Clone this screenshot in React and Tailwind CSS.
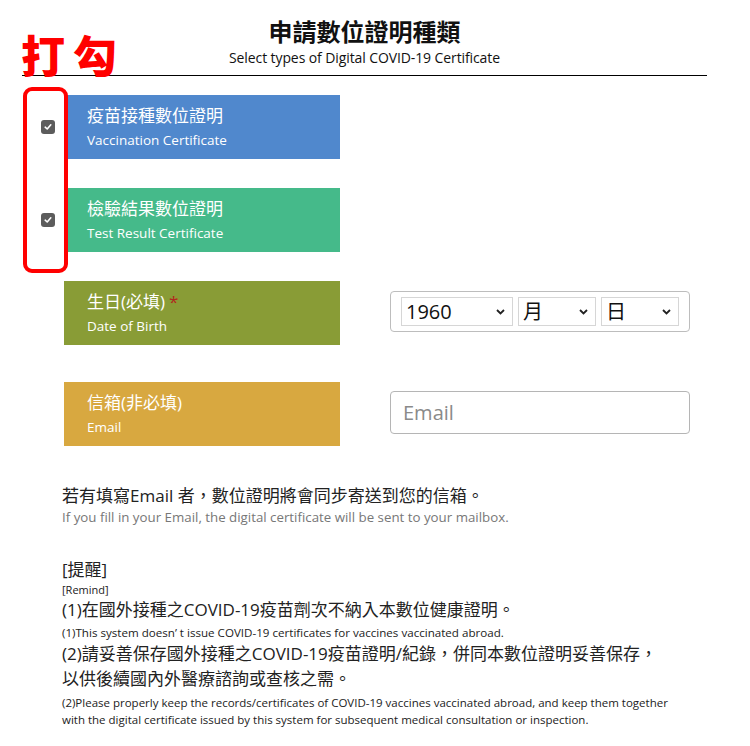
import React from 'react';

const font = { fontFamily: '"Open Sans", "Noto Sans CJK TC", sans-serif' };

const CheckBox = () => (
  <div className="w-[14px] h-[14px] rounded-[3px] bg-[#5c5c5c] flex items-center justify-center">
    <svg width="8" height="8" viewBox="0 0 8 8">
      <path d="M1.2 4.2 L3.2 6 L6.8 1.8" fill="none" stroke="#fff" strokeWidth="1.6" strokeLinecap="round" strokeLinejoin="round" />
    </svg>
  </div>
);

const Chevron = () => (
  <svg width="9" height="6" viewBox="0 0 9 6">
    <path d="M1 1 L4.5 4.5 L8 1" fill="none" stroke="#222" strokeWidth="1.8" />
  </svg>
);

const LabelBox = ({ color, zh, en, required }) => (
  <div className={`w-[276px] h-[64px] ${color} pl-[23px] pt-[9px] text-white`}>
    <div className="text-[17px] leading-[24px]">
      {zh}
      {required && <span className="text-[#b3261e] ml-[4px]">*</span>}
    </div>
    <div className="text-[13.5px] leading-[20px] mt-[2px]">{en}</div>
  </div>
);

const SelectBox = ({ value, width }) => (
  <div className={`${width} h-[29px] border border-[#d6d6d6] flex items-center justify-between pl-[4px] pr-[7px]`}>
    <span className="text-[20px] leading-none text-[#111]">{value}</span>
    <Chevron />
  </div>
);

export default function App() {
  return (
    <div className="relative w-[750px] h-[746px] bg-white overflow-hidden text-[#222]" style={font}>
      <div className="ml-[22px] w-[685px]">
        {/* Header */}
        <div className="pt-[17px] pb-[8px] border-b-[1.5px] border-black text-center">
          <h1 className="text-[24px] leading-[29px] font-bold text-[#111]">申請數位證明種類</h1>
          <p className="text-[14px] leading-[19px] mt-[2px] tracking-[-0.1px] text-[#111]">Select types of Digital COVID-19 Certificate</p>
        </div>

        {/* Certificate types */}
        <div className="flex items-center mt-[19px]">
          <div className="w-[42px] pl-[19px]"><CheckBox /></div>
          <LabelBox color="bg-[#5088cd]" zh="疫苗接種數位證明" en="Vaccination Certificate" />
        </div>
        <div className="flex items-center mt-[29px]">
          <div className="w-[42px] pl-[19px]"><CheckBox /></div>
          <LabelBox color="bg-[#45ba8a]" zh="檢驗結果數位證明" en="Test Result Certificate" />
        </div>

        {/* Date of birth */}
        <div className="flex items-start mt-[29px] pl-[42px]">
          <LabelBox color="bg-[#899c36]" zh="生日(必填)" en="Date of Birth" required />
          <div className="ml-[50px] mt-[10px] w-[300px] h-[41px] border border-[#bdbdbd] rounded-[4px] flex items-center gap-[5px] pl-[10px]">
            <SelectBox value="1960" width="w-[112px]" />
            <SelectBox value="月" width="w-[78px]" />
            <SelectBox value="日" width="w-[78px]" />
          </div>
        </div>

        {/* Email */}
        <div className="flex items-start mt-[37px] pl-[42px]">
          <LabelBox color="bg-[#d8a840]" zh="信箱(非必填)" en="Email" />
          <input
            placeholder="Email"
            className="ml-[50px] mt-[9px] w-[300px] h-[43px] border border-[#b5b5b5] rounded-[4px] px-[12px] text-[20px] placeholder:text-[#8a8a8a] outline-none"
          />
        </div>

        {/* Notes */}
        <div className="pl-[40px] mt-[38px]">
          <p className="text-[17px] leading-[24px]">若有填寫Email 者，數位證明將會同步寄送到您的信箱。</p>
          <p className="text-[13.3px] leading-[18px] text-[#777]">If you fill in your Email, the digital certificate will be sent to your mailbox.</p>

          <p className="text-[17px] leading-[24px] mt-[32px]">[提醒]</p>
          <p className="text-[11px] leading-[15px]">[Remind]</p>
          <p className="text-[17px] leading-[25px]">(1)在國外接種之COVID-19疫苗劑次不納入本數位健康證明。</p>
          <p className="text-[11.6px] leading-[17px] mt-[2px]">(1)This system doesn’ t issue COVID-19 certificates for vaccines vaccinated abroad.</p>
          <p className="text-[17px] leading-[25px]">(2)請妥善保存國外接種之COVID-19疫苗證明/紀錄，併同本數位證明妥善保存，</p>
          <p className="text-[17px] leading-[25px]">以供後續國內外醫療諮詢或查核之需。</p>
          <p className="text-[11.5px] leading-[17px] mt-[3px] w-[615px]">(2)Please properly keep the records/certificates of COVID-19 vaccines vaccinated abroad, and keep them together with the digital certificate issued by this system for subsequent medical consultation or inspection.</p>
        </div>
      </div>

      {/* Annotation overlay */}
      <div className="absolute left-[21px] top-[28px] text-[#ff0000] text-[44px] leading-[52px] font-black tracking-[8px]" style={{ fontFamily: '"Noto Sans CJK TC", sans-serif' }}>打勾</div>
      <div className="absolute left-[23px] top-[87px] w-[45px] h-[186px] border-[4px] border-[#ff0000] rounded-[9px]" />
    </div>
  );
}
